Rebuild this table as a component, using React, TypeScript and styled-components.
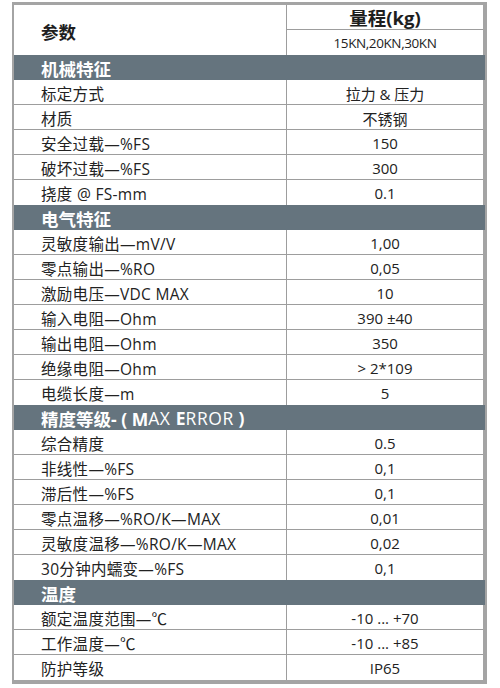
import React from "react";
import styled, { createGlobalStyle } from "styled-components";

const Global = createGlobalStyle`
  html, body { margin: 0; padding: 0; background: #ffffff; }
  body { font-family: "Open Sans", "Noto Sans CJK SC", sans-serif; color: #222; }
`;

const LINE = "#9d9d9d";

const Sheet = styled.div`
  box-sizing: border-box;
  width: 475px;
  margin: 2px 0 0 12px;
  border-style: solid;
  border-color: #a4a4a4;
  border-width: 3px 4px 4px 2px;
  background: #fff;
`;

const Header = styled.div`
  display: grid;
  grid-template-columns: 273px 1fr;
  grid-template-rows: 25px 25px;
`;

const ParamCell = styled.div`
  grid-row: 1 / span 2;
  box-sizing: border-box;
  border-right: 1px solid ${LINE};
  display: flex;
  align-items: center;
  padding: 3px 0 0 27px;
  font-size: 17.5px;
  font-weight: 700;
  color: #1e1e1e;
`;

const RangeTitle = styled.div`
  box-sizing: border-box;
  border-bottom: 1px solid ${LINE};
  display: flex;
  align-items: center;
  justify-content: center;
  font-size: 18.5px;
  font-weight: 700;
  color: #1e1e1e;
  padding-bottom: 1px;
`;

const RangeSub = styled.div`
  display: flex;
  align-items: center;
  justify-content: center;
  font-size: 13.5px;
  letter-spacing: -0.4px;
  color: #1e1e1e;
`;

const Band = styled.div`
  box-sizing: border-box;
  height: 25px;
  margin-right: -2px;
  background: #65747e;
  color: #fff;
  display: flex;
  align-items: center;
  padding: 1px 0 0 27px;
  font-size: 17.5px;
  font-weight: 700;
  white-space: pre;
`;

const Light = styled.span`
  font-weight: 500;
  letter-spacing: 0.6px;
`;

const Row = styled.div<{ $last?: boolean }>`
  display: grid;
  grid-template-columns: 273px 1fr;
  box-sizing: border-box;
  height: 25px;
  border-bottom: ${(p) => (p.$last ? "none" : `1px solid ${LINE}`)};
`;

const Label = styled.div`
  box-sizing: border-box;
  border-right: 1px solid ${LINE};
  display: flex;
  align-items: center;
  padding: 2px 0 0 27px;
  font-size: 15.5px;
  letter-spacing: 0.3px;
  color: #222;
  white-space: pre;
`;

const Value = styled.div`
  display: flex;
  align-items: center;
  justify-content: center;
  padding-top: 1px;
  font-size: 15px;
  color: #222;
  white-space: pre;
`;

type Section = { title: React.ReactNode; rows: [string, string][] };

const sections: Section[] = [
  {
    title: "机械特征",
    rows: [
      ["标定方式", "拉力 & 压力"],
      ["材质", "不锈钢"],
      ["安全过载—%FS", "150"],
      ["破坏过载—%FS", "300"],
      ["挠度 @ FS-mm", "0.1"],
    ],
  },
  {
    title: "电气特征",
    rows: [
      ["灵敏度输出—mV/V", "1,00"],
      ["零点输出—%RO", "0,05"],
      ["激励电压—VDC MAX", "10"],
      ["输入电阻—Ohm", "390 ±40"],
      ["输出电阻—Ohm", "350"],
      ["绝缘电阻—Ohm", "> 2*109"],
      ["电缆长度—m", "5"],
    ],
  },
  {
    title: (
      <>
        精度等级- ( M<Light>AX </Light>E<Light>RROR</Light> )
      </>
    ),
    rows: [
      ["综合精度", "0.5"],
      ["非线性—%FS", "0,1"],
      ["滞后性—%FS", "0,1"],
      ["零点温移—%RO/K—MAX", "0,01"],
      ["灵敏度温移—%RO/K—MAX", "0,02"],
      ["30分钟内蠕变—%FS", "0,1"],
    ],
  },
  {
    title: "温度",
    rows: [
      ["额定温度范围—℃", "-10 ... +70"],
      ["工作温度—℃", "-10 ... +85"],
      ["防护等级", "IP65"],
    ],
  },
];

export default function App() {
  return (
    <>
      <Global />
      <Sheet>
        <Header>
          <ParamCell>参数</ParamCell>
          <RangeTitle>量程(kg)</RangeTitle>
          <RangeSub>15KN,20KN,30KN</RangeSub>
        </Header>
        {sections.map((s, si) => (
          <React.Fragment key={si}>
            <Band>{s.title}</Band>
            {s.rows.map(([l, v], ri) => (
              <Row key={ri} $last={ri === s.rows.length - 1}>
                <Label>{l}</Label>
                <Value>{v}</Value>
              </Row>
            ))}
          </React.Fragment>
        ))}
      </Sheet>
    </>
  );
}
